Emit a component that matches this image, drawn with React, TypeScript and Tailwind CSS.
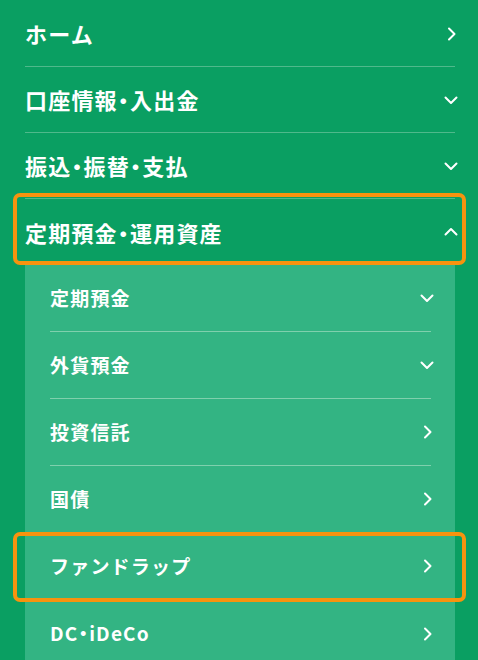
import { Fragment } from "react";

type Dir = "right" | "down" | "up";

interface NavItem {
  label: string;
  icon: Dir;
  highlight?: boolean;
}

const topItems: NavItem[] = [
  { label: "ホーム", icon: "right" },
  { label: "口座情報・入出金", icon: "down" },
  { label: "振込・振替・支払", icon: "down" },
];

const subItems: NavItem[] = [
  { label: "定期預金", icon: "down" },
  { label: "外貨預金", icon: "down" },
  { label: "投資信託", icon: "right" },
  { label: "国債", icon: "right" },
  { label: "ファンドラップ", icon: "right", highlight: true },
  { label: "DC・iDeCo", icon: "right" },
];

const paths: Record<Dir, string> = {
  right: "M5 1.5 L10.5 7 L5 12.5",
  down: "M1.5 4.5 L7 10 L12.5 4.5",
  up: "M1.5 9.5 L7 4 L12.5 9.5",
};

const Chevron = ({ dir }: { dir: Dir }) => (
  <svg width="14" height="14" viewBox="0 0 14 14" fill="none" className="shrink-0 -mr-[3px]">
    <path d={paths[dir]} stroke="white" strokeWidth="2" strokeLinecap="round" strokeLinejoin="round" />
  </svg>
);

// the middle dot renders half width in the reference
const Label = ({ text }: { text: string }) => {
  const parts = text.split("・");
  return (
    <span className="tracking-[1.2px]">
      {parts.map((p, i) => (
        <Fragment key={i}>
          {i > 0 && <span className="[font-feature-settings:'palt']">・</span>}
          {p}
        </Fragment>
      ))}
    </span>
  );
};

export default function App() {
  return (
    <div
      className="min-h-screen w-[478px] h-[660px] overflow-hidden bg-[#0a9f62] pl-[25px] pr-[23px] pt-[1px] text-white font-bold"
      style={{ fontFamily: '"Noto Sans CJK JP", "Noto Sans", sans-serif' }}
    >
      <ul>
        {topItems.map((item) => (
          <li
            key={item.label}
            className="flex h-[66px] items-center justify-between border-b border-[#4fb98b] text-[22px] last:border-b-0"
          >
            <Label text={item.label} />
            <Chevron dir={item.icon} />
          </li>
        ))}

        {/* expanded section */}
        <li className="relative flex h-[66px] items-center justify-between text-[22px]">
          <span className="pointer-events-none absolute -left-[12px] -right-[11px] top-[-6px] bottom-0 rounded-[7px] border-[4px] border-[#f7930e]" />
          <Label text="定期預金・運用資産" />
          <Chevron dir="up" />
        </li>
        <li className="bg-[#33b483] pl-[25px] pr-[24px]">
          <ul>
            {subItems.map((item) => (
              <li
                key={item.label}
                className="relative flex h-[67px] items-center justify-between border-b border-[#7fd0ad] text-[19px] last:border-b-0"
              >
                {item.highlight && (
                  <span className="pointer-events-none absolute -left-[37px] -right-[35px] top-[-1px] bottom-[-3px] rounded-[7px] border-[4px] border-[#f7930e]" />
                )}
                <Label text={item.label} />
                <Chevron dir={item.icon} />
              </li>
            ))}
          </ul>
        </li>
      </ul>
    </div>
  );
}
